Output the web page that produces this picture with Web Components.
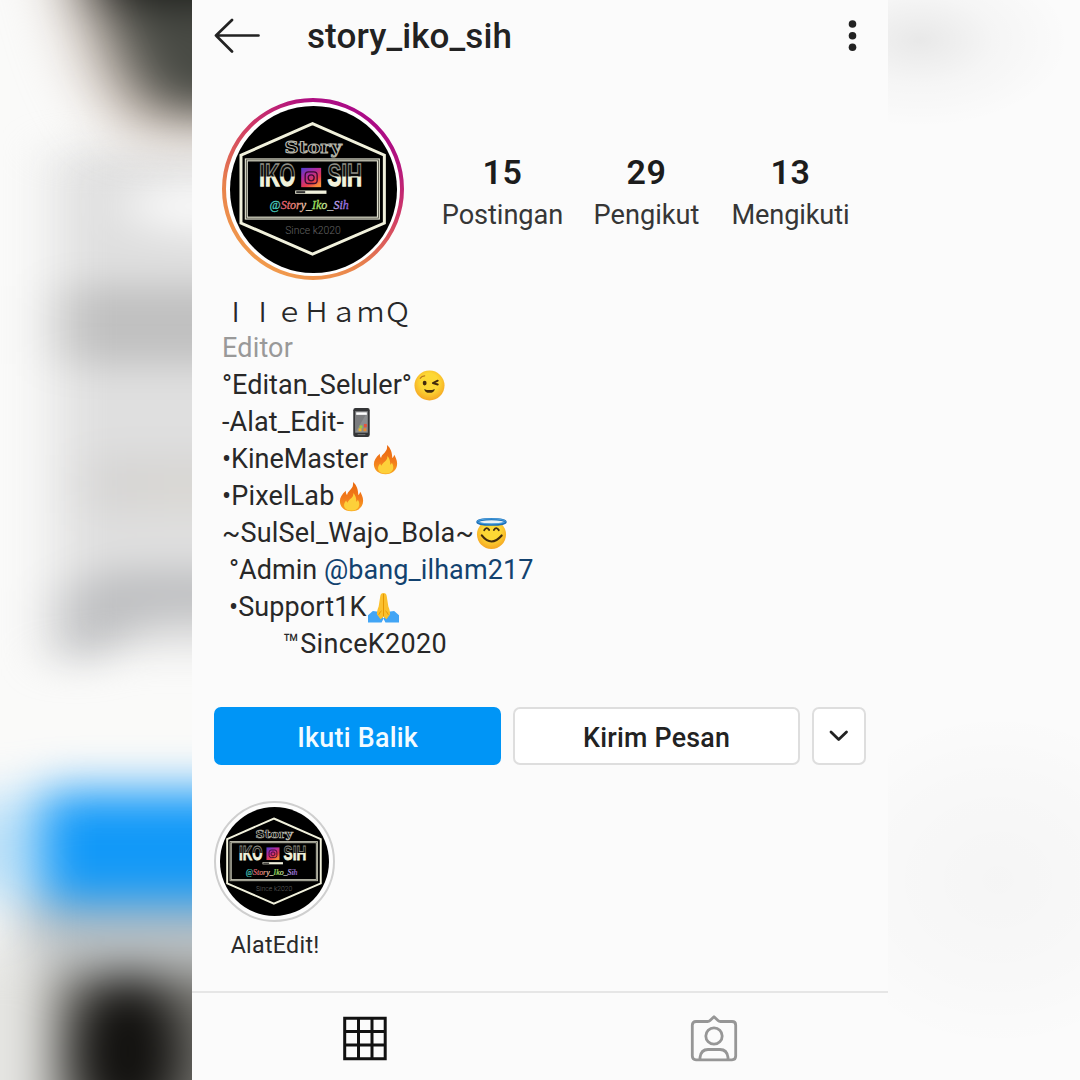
<!DOCTYPE html>
<html lang="id">
<head>
<meta charset="utf-8">
<title>story_iko_sih</title>
<style>
html,body{margin:0;padding:0;width:1080px;height:1080px;overflow:hidden;background:#fafafa}
body{font-family:Roboto,"Liberation Sans",sans-serif;color:#2a2a2a}
</style>
</head>
<body>
<profile-page></profile-page>
<script>
const define = (name, css, html, after) => customElements.define(name, class extends HTMLElement {
  connectedCallback() {
    if (this.shadowRoot) return;
    const root = this.attachShadow({ mode: 'open' });
    root.innerHTML = `<style>${css}</style>${typeof html === 'function' ? html(this) : html}`;
    if (after) after(this, root);
  }
});

/* Text run tracked so that its advance equals the "w" attribute. */
define('fit-text', ':host{display:inline-block;white-space:pre}span{display:inline-block;white-space:pre}',
  el => `<span>${el.getAttribute('text')}</span>`,
  (el, root) => {
    const s = root.querySelector('span'), w = +el.getAttribute('w');
    const n = [...s.textContent].length;
    const natural = s.getBoundingClientRect().width;
    s.style.letterSpacing = ((w - natural) / n) + 'px';
    s.style.marginRight = -((w - natural) / n) + 'px';
  });

const face = id => `<defs><radialGradient id="f${id}" cx=".5" cy=".4" r=".6"><stop offset=".5" stop-color="#fdd835"/><stop offset="1" stop-color="#f5a623"/></radialGradient></defs>`;
const EMOJI = {
  wink: face('w') + `<circle cx="16" cy="16" r="15.500" fill="url(#fw)"/>
    <ellipse cx="11" cy="13.500" rx="2" ry="2.400" fill="#422b0d"/><path d="M24.500 11l-5 2.500 5 1.500" fill="none" stroke="#422b0d" stroke-width="2" stroke-linecap="round" stroke-linejoin="round"/>
    <path d="M6.500 8.500q1.500-2.300 4.500-2.500" fill="none" stroke="#b9771a" stroke-width="1.300" stroke-linecap="round"/>
    <path d="M10.500 19.500q5.500 2.500 11 0q-.8 4-5.500 4t-5.500-4z" fill="#422b0d"/>`,
  phone: `<rect x="7.500" y="1" width="17" height="30" rx="2.300" fill="#333436"/><rect x="9.500" y="4.500" width="13" height="22" fill="#8b8d8f"/><path d="M9.500 26.500v-22h13z" fill="#7b7c7e"/>
    <rect x="10.500" y="5.500" width="11" height="2.600" fill="#fff"/><rect x="14" y="19" width="3" height="3" fill="#9ccc3c"/><rect x="18.500" y="17.500" width="3" height="3.500" fill="#e5533d"/><rect x="13" y="22" width="3" height="3" fill="#f0b429"/><rect x="18" y="22" width="3" height="3" fill="#e98a2b"/><rect x="12" y="28" width="8" height="1" fill="#777"/>`,
  fire: `<defs><linearGradient id="fr" x1="0" y1="0" x2="0" y2="1"><stop offset="0" stop-color="#e9680c"/><stop offset=".55" stop-color="#f27a1c"/><stop offset="1" stop-color="#f9a51f"/></linearGradient></defs>
    <path d="M17.500 1c.8 5-1.500 7-4.500 10-1 1-1.500 2.500-1.500 3.500-1-1-1.500-2.600-1.300-4.500C6 13.500 4 17 4 21c0 6 5 10.300 12 10.300S28 27 28 20.500c0-4.500-1.800-7-3-9.500-.5 1.500-.9 2.600-2 3.500C23 9.500 21.500 4 17.500 1z" fill="url(#fr)"/>
    <path d="M17.800 12.500c.5 4-2 5-4.500 7.500-.8.800-1.300 1.800-1.300 2.500-.8-.6-1.300-1.500-1.500-2.500-1.600 1.800-2.200 3.300-2.200 5 0 3.500 3.200 5.500 7.700 5.500s8-2.300 8-6.500c0-2-.6-3.500-1.500-4.700-.4 1-.8 1.600-1.600 2.100.1-3.500-.6-6.500-3.100-8.900z" fill="#fdd03a"/>`,
  halo: face('h') + `<circle cx="16" cy="17" r="15" fill="url(#fh)"/>
    <ellipse cx="16" cy="4" rx="14.500" ry="2.800" fill="#e8f1f6" stroke="#1b6fb8" stroke-width="2.400"/><ellipse cx="16" cy="3.500" rx="14.300" ry="2.600" fill="none" stroke="#5cb3ee" stroke-width=".8"/>
    <path d="M8.500 12.500q2.300-4 5-.2M18.500 12.300q2.500-3.800 5 .2" fill="none" stroke="#422b0d" stroke-width="2" stroke-linecap="round"/>
    <path d="M6 18q9.700 12.500 20.500 0" fill="none" stroke="#422b0d" stroke-width="2.200" stroke-linecap="round"/>`,
  pray: `<path d="M0 31.500V24l5-4.300 8 1 3 7-2 3.800zM32 31.500V24l-5-4.300-8 1-3 7 2 3.800z" fill="#42a5f5"/>
    <path d="M16 1c-2 0-3 1-3.300 3l-1.700 11c-1.200 3-1.800 5.500-1.800 8l3.800 5 3-2.500 3 2.500L22.800 23c0-2.500-.6-5-1.800-8L19.300 4c-.3-2-1.300-3-3.300-3z" fill="#fbc02d"/><path d="M16 2v23" stroke="#e59600" stroke-width="1"/><path d="M11 23.500q1.500-3.500 3-4M21 23.500q-1.500-3.500-3-4" fill="none" stroke="#e59600"/>`
};
define('emoji-glyph', ':host{display:block;width:31px;height:31px;flex:none}svg{display:block;width:100%;height:100%}',
  el => `<svg viewBox="0 0 32 32">${EMOJI[el.getAttribute('name')]}</svg>`);

define('brand-disc', ':host{display:block;border-radius:50%;overflow:hidden;background:#000}svg{display:block;width:100%;height:100%}', `
<svg viewBox="44 46 502 502">
  <defs>
    <linearGradient id="half" x1="0" y1="222" x2="0" y2="290" gradientUnits="userSpaceOnUse"><stop offset=".5" stop-color="#0a0a0a"/><stop offset=".56" stop-color="#f2f3dc"/></linearGradient>
    <linearGradient id="edge" x1="0" y1="222" x2="0" y2="290" gradientUnits="userSpaceOnUse"><stop offset=".5" stop-color="#8f8f86"/><stop offset=".56" stop-color="#f2f3dc"/></linearGradient>
    <linearGradient id="ig" x1="0" y1="0" x2=".7" y2="1"><stop offset="0" stop-color="#4a3fd0"/><stop offset=".4" stop-color="#b02aa0"/><stop offset=".75" stop-color="#e83b4a"/><stop offset="1" stop-color="#f58b3a"/></linearGradient>
    <linearGradient id="tag" x1="162" y1="0" x2="402" y2="0" gradientUnits="userSpaceOnUse"><stop offset="0" stop-color="#3fd0c4"/><stop offset=".12" stop-color="#48c9b8"/><stop offset=".16" stop-color="#e8566a"/><stop offset=".35" stop-color="#f08a78"/><stop offset=".5" stop-color="#f0ead0"/><stop offset=".57" stop-color="#8fe04a"/><stop offset=".68" stop-color="#c6ef8a"/><stop offset=".84" stop-color="#b99af0"/><stop offset="1" stop-color="#8a5be0"/></linearGradient>
  </defs>
  <path d="M292 99L508 194V398L292 491L77 398V194Z" fill="none" stroke="#f1f1dc" stroke-width="9"/>
  <rect x="93" y="208" width="397" height="175" fill="#000" stroke="#e9e9d6" stroke-width="9"/>
  <rect x="93" y="208" width="397" height="175" fill="none" stroke="#3c3c34" stroke-width="2.500"/>
  <text x="208" y="188" font-family="DejaVu Serif" font-weight="700" font-size="48" textLength="172" lengthAdjust="spacingAndGlyphs" fill="#000" stroke="#b4b4a9" stroke-width="3">Story</text>
  <text x="132" y="288" font-family="Liberation Sans" font-weight="700" font-size="92" textLength="108" lengthAdjust="spacingAndGlyphs" fill="url(#half)" stroke="url(#edge)" stroke-width="4">IKO</text>
  <text x="337" y="288" font-family="Liberation Sans" font-weight="700" font-size="92" textLength="104" lengthAdjust="spacingAndGlyphs" fill="url(#half)" stroke="url(#edge)" stroke-width="4">SIH</text>
  <rect x="258" y="232" width="60" height="58" fill="url(#ig)"/>
  <rect x="270" y="244" width="36" height="35" rx="10" fill="none" stroke="#3a0b30" stroke-width="4"/><circle cx="288" cy="262" r="9" fill="none" stroke="#3a0b30" stroke-width="4"/>
  <rect x="240" y="300" width="94" height="10" fill="#f1f1dc"/><rect x="243" y="302" width="27" height="6" fill="#333"/>
  <text x="163" y="357" font-family="Liberation Serif" font-style="italic" font-weight="400" font-size="40" textLength="238" lengthAdjust="spacingAndGlyphs" fill="url(#tag)" stroke="url(#tag)" stroke-width="1">@Story_Iko_Sih</text>
  <text x="210" y="431" font-family="Roboto" font-weight="300" font-size="35" textLength="167" lengthAdjust="spacingAndGlyphs" fill="#666">Since k2020</text>
</svg>`);

define('story-ring', `:host{display:grid;place-items:center;width:182px;height:182px;flex:none}
  svg,brand-disc{grid-area:1/1}brand-disc{width:167px;height:167px}`, `
<svg width="182" height="182" viewBox="0 0 182 182"><defs><linearGradient id="r" x1=".2" y1="1" x2=".8" y2="0"><stop offset="0" stop-color="#f3a04c"/><stop offset=".3" stop-color="#e8824c"/><stop offset=".6" stop-color="#d03a66"/><stop offset=".85" stop-color="#b01080"/><stop offset="1" stop-color="#a6068c"/></linearGradient></defs><circle cx="91" cy="91" r="89" fill="#fff" stroke="url(#r)" stroke-width="4"/></svg><brand-disc></brand-disc>`);

define('top-bar', `:host{display:flex;align-items:center;height:72px;padding:0 31px 0 21px;color:#222}
  svg{display:block;flex:none}.t{flex:1;padding:2px 0 0 47px;font-size:35px;font-weight:500;line-height:40px}`, `
<svg width="47" height="40" viewBox="0 0 47 40" fill="none" stroke="#222" stroke-width="2.700" stroke-linecap="round" stroke-linejoin="round"><path d="M19 4L3 19.500L19 35.500M3 19.500H45.500"/></svg>
<div class="t"><fit-text w="205" text="story_iko_sih"></fit-text></div>
<svg width="9" height="34" viewBox="0 0 9 34" fill="#222"><circle cx="4.500" cy="5" r="3.800"/><circle cx="4.500" cy="16.700" r="3.800"/><circle cx="4.500" cy="28.300" r="3.800"/></svg>`);

define('stat-item', `:host{display:flex;flex-direction:column;align-items:center;width:144px}
  .n{font-size:34px;font-weight:600;line-height:40px;color:#1c1c1c;letter-spacing:.5px}.l{font-size:27.200px;line-height:32px;padding-top:7px;color:#363636}`,
  el => `<div class="n">${el.getAttribute('n')}</div><div class="l"><fit-text w="${el.getAttribute('w')}" text="${el.getAttribute('label')}"></fit-text></div>`);

define('profile-head', `:host{display:flex;align-items:center;padding:26px 0 0 30px}.s{display:flex;padding:4px 0 0 26.500px}`, `
<story-ring></story-ring><div class="s"><stat-item n="15" label="Postingan" w="121.500"></stat-item><stat-item n="29" label="Pengikut" w="106"></stat-item><stat-item n="13" label="Mengikuti" w="118"></stat-item></div>`);

define('bio-line', `:host{display:flex;align-items:center;height:36.95px;line-height:36.95px;font-size:27px;white-space:pre}`, '<slot></slot>');

define('profile-bio', `:host{display:block;padding:13px 0 0 30px;color:#282828}
  .name{display:flex;font-family:"Noto Sans CJK SC",sans-serif;font-weight:350;font-size:27px;line-height:36px;height:37.500px}
  .name i{font-style:normal;width:27px;text-align:center}
  .cat{font-size:27px;line-height:35px;height:36.800px;color:#999}a{color:#12426f}
  .i{padding-left:7px}.j{padding-left:61px}emoji-glyph{margin-left:1.800px}`, `
<div class="name"><i>I</i><i>I</i><span>ｅＨａｍＱ</span></div>
<div class="cat"><fit-text w="71" text="Editor"></fit-text></div>
<bio-line><fit-text w="190" text="°Editan_Seluler°"></fit-text><emoji-glyph name="wink"></emoji-glyph></bio-line>
<bio-line><fit-text w="122" text="-Alat_Edit-"></fit-text><emoji-glyph name="phone"></emoji-glyph></bio-line>
<bio-line><fit-text w="146" text="•KineMaster"></fit-text><emoji-glyph name="fire"></emoji-glyph></bio-line>
<bio-line><fit-text w="112.500" text="•PixelLab"></fit-text><emoji-glyph name="fire"></emoji-glyph></bio-line>
<bio-line><fit-text w="252" text="~SulSel_Wajo_Bola~"></fit-text><emoji-glyph name="halo"></emoji-glyph></bio-line>
<bio-line class="i"><fit-text w="95" text="°Admin "></fit-text><a><fit-text w="209.500" text="@bang_ilham217"></fit-text></a></bio-line>
<bio-line class="i"><fit-text w="137.500" text="•Support1K"></fit-text><emoji-glyph name="pray"></emoji-glyph></bio-line>
<bio-line class="j"><fit-text w="164" text="™SinceK2020"></fit-text></bio-line>`);

define('action-button', `:host{display:flex;align-items:center;justify-content:center;box-sizing:border-box;height:58px;border:2px solid #dedede;border-radius:7px;background:#fff;font-size:26.800px;font-weight:500;color:#222;width:287px;padding-top:3.500px}
  :host([primary]){background:#0095f6;border-color:#0095f6;color:#f2fbff}:host([small]){width:54px;padding-top:0}`, '<slot></slot>');

define('action-row', ':host{display:flex;gap:12px;padding:0 22px}svg{display:block}', `
<action-button primary><fit-text w="121" text="Ikuti Balik"></fit-text></action-button>
<action-button><fit-text w="147" text="Kirim Pesan"></fit-text></action-button>
<action-button small><svg width="22" height="14" viewBox="0 0 22 14" fill="none" stroke="#222" stroke-width="2.800" stroke-linecap="round" stroke-linejoin="round"><path d="M3 3L10.700 10.500L18.500 3"/></svg></action-button>`);

define('story-highlight', `:host{display:flex;flex-direction:column;align-items:center;width:122px}
  .r{display:flex;align-items:center;justify-content:center;box-sizing:border-box;width:121px;height:121px;border:2px solid #cfcfcf;border-radius:50%;background:#fdfdfd}
  brand-disc{width:109px;height:109px}.l{font-size:23.200px;line-height:28px;padding:9px 0 0 2px;color:#2a2a2a}`, `
<div class="r"><brand-disc></brand-disc></div><div class="l"><fit-text w="89" text="AlatEdit!"></fit-text></div>`);

define('profile-tabs', `:host{display:flex;box-sizing:border-box;height:89px;border-top:2px solid #e6e6e6}div{flex:1;display:flex;justify-content:center;padding-top:22px}svg{display:block}`, `
<div><svg width="46" height="48" viewBox="0 0 46 48" fill="none" stroke="#111" stroke-width="3"><path d="M1.700 3.200H42.200V43.700H1.700ZM15.500 3.200V43.700M29 3.200V43.700M1.700 16.500H42.200M1.700 30H42.200"/></svg></div>
<div><svg width="48" height="48" viewBox="0 0 48 48" fill="none" stroke="#969696" stroke-width="2.800" stroke-linejoin="round"><path d="M6 6.500H17.500Q19 6.500 20 5.500L24 1.800L28 5.500Q29 6.500 30.500 6.500H42Q45.700 6.500 45.700 10.200V41Q45.700 44.800 42 44.800H6Q2.300 44.800 2.300 41V10.200Q2.300 6.500 6 6.500Z"/><circle cx="24" cy="21" r="8.200"/><path d="M10 44.500V42.500Q11 34.500 18 34.500H30Q37 34.500 38 42.500V44.500"/></svg></div>`);

define('profile-screen', `:host{display:flex;flex-direction:column;width:696px;height:1080px;background:#fbfbfb;flex:none}
  action-row{margin-top:44.100px}story-highlight{margin:36px 0 0 21px}profile-tabs{margin-top:auto}`, `
<top-bar></top-bar><profile-head></profile-head><profile-bio></profile-bio><action-row></action-row><story-highlight></story-highlight><profile-tabs></profile-tabs>`);

define('left-haze', ':host{display:block;width:192px;height:1080px;overflow:hidden;flex:none}svg{display:block}', `
<svg width="192" height="1080" viewBox="0 0 192 1080">
  <defs>
    <filter id="a" x="-300" y="-300" width="900" height="900" filterUnits="userSpaceOnUse" color-interpolation-filters="sRGB"><feGaussianBlur stdDeviation="29 22"/></filter>
    <filter id="b" x="-200" y="-200" width="700" height="1500" filterUnits="userSpaceOnUse" color-interpolation-filters="sRGB"><feGaussianBlur stdDeviation="26 18"/></filter>
    <filter id="c" x="-200" y="-200" width="700" height="1500" filterUnits="userSpaceOnUse" color-interpolation-filters="sRGB"><feGaussianBlur stdDeviation="25 23"/></filter>
  </defs>
  <rect width="192" height="1080" fill="#fafaf9"/>
  <g filter="url(#b)">
    <rect x="55" y="150" width="260" height="500" fill="#dfdfdf"/>
    <ellipse cx="200" cy="206" rx="75" ry="26" fill="#f8f8f8"/>
    <rect x="58" y="286" width="260" height="78" fill="#c0c0c0"/>
    <rect x="85" y="455" width="220" height="58" fill="#d6d5d4"/>
    <rect x="140" y="475" width="160" height="35" fill="#dad8d4"/>
    <path d="M58 592L110 570H320V618H150L90 662H58Z" fill="#bfc0c2"/>
  </g>
  <g filter="url(#a)">
    <path d="M30 -220H380V140H140Q60 110 30 -220Z" fill="#cfc2b8"/>
    <path d="M64 -220H380V112H165Q95 75 64 -220Z" fill="#484a44"/>
    <rect x="90" y="-220" width="300" height="222" fill="#1b1c19"/>
  </g>
  <g filter="url(#c)">
    <rect x="-100" y="798" width="150" height="100" fill="#bfe2f8"/>
    <rect x="20" y="900" width="300" height="60" fill="#b8bec1"/>
    <rect x="42" y="790" width="300" height="114" fill="#1299f8"/>
    <rect x="-100" y="950" width="150" height="230" fill="#e6e6e3"/>
    <path d="M50 968H330V1220H50Z" fill="#777671"/>
    <ellipse cx="128" cy="1052" rx="54" ry="76" fill="#12110f"/>
  </g>
</svg>`);

define('right-haze', `:host{display:block;width:192px;height:1080px;flex:none;background:
  radial-gradient(ellipse 150px 88px at 32px 40px,rgba(0,0,0,.075),rgba(0,0,0,.025) 50%,transparent),
  radial-gradient(ellipse 190px 170px at 110px 880px,rgba(0,0,0,.022),rgba(0,0,0,.012) 60%,transparent),#fbfbfb}`, '');

define('profile-page', ':host{display:flex;width:1080px;height:1080px;overflow:hidden}', '<left-haze></left-haze><profile-screen></profile-screen><right-haze></right-haze>');
</script>
</body>
</html>
